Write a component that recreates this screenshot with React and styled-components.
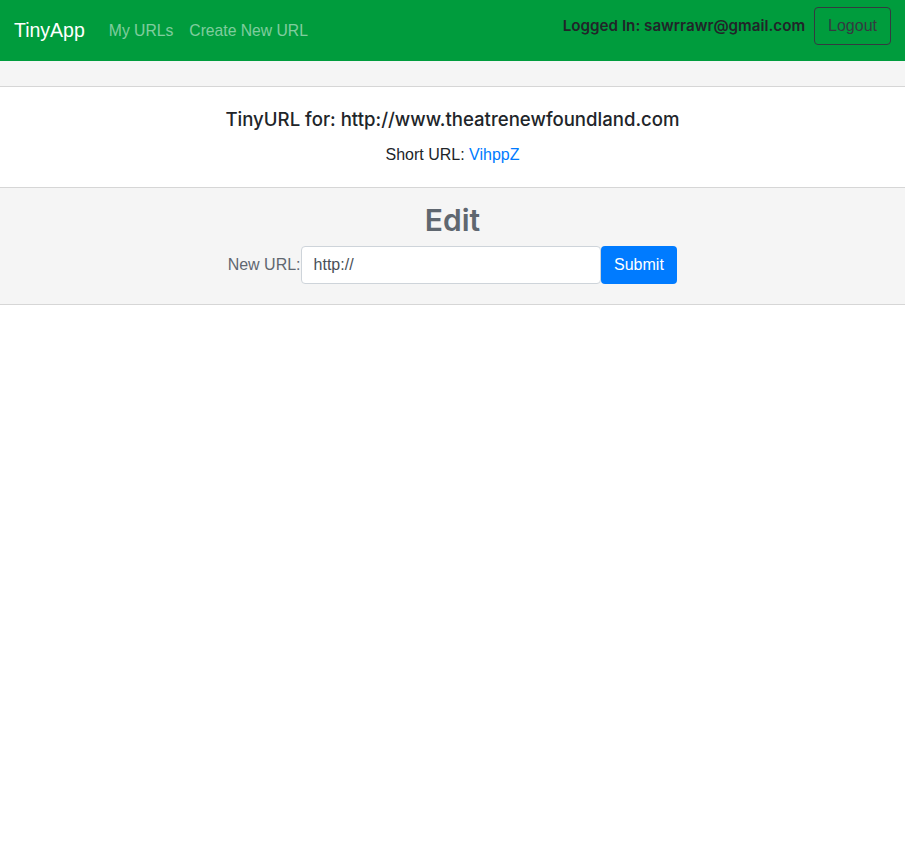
import React from "react";
import styled, { createGlobalStyle } from "styled-components";

const Global = createGlobalStyle`
  html, body { margin: 0; padding: 0; background: #fff; }
  body {
    font-family: "Liberation Sans", Arial, sans-serif;
    font-size: 16px;
    line-height: 1.5;
    color: #212529;
  }
  * { box-sizing: border-box; }
`;

const Navbar = styled.nav`
  height: 61px;
  background: #009c3d;
  display: flex;
  align-items: center;
  padding: 0 14px 0 14px;
`;

const Brand = styled.a`
  font-size: 19.5px;
  color: #fff;
  text-decoration: none;
  margin-right: 24px;
  line-height: 1;
  padding-top: 1px;
`;

const NavLinks = styled.div`
  display: flex;
  gap: 16px;
  flex: 1;
`;

const NavLink = styled.a`
  font-size: 15.7px;
  color: rgba(255, 255, 255, 0.5);
  text-decoration: none;
  padding-top: 1px;
`;

const UserArea = styled.div`
  display: flex;
  align-items: center;
  gap: 9px;
  margin-top: -9px;
`;

const UserText = styled.span`
  font-family: Inter, "Liberation Sans", sans-serif;
  font-size: 15.2px;
  font-weight: 600;
  color: #212529;
  padding-top: 1px;
`;

const LogoutButton = styled.button`
  font-family: inherit;
  font-size: 16px;
  color: #343a40;
  background: transparent;
  border: 1px solid #343a40;
  border-radius: 4px;
  height: 38px;
  padding: 0 13px;
  cursor: pointer;
`;

const Strip = styled.div`
  height: 26px;
  background: #f5f5f5;
  border-bottom: 1px solid #d6d6d6;
`;

const Card = styled.section`
  background: #fff;
  border-bottom: 1px solid #d6d6d6;
  text-align: center;
  padding: 21px 0 20px;
`;

const Title = styled.h5`
  margin: 0 0 13px;
  font-family: Inter, "Liberation Sans", sans-serif;
  font-size: 18.6px;
  font-weight: 500;
  line-height: 1.2;
  color: #212529;
`;

const ShortLine = styled.p`
  margin: 0;
  font-size: 16px;
`;

const Link = styled.a`
  color: #007bff;
  text-decoration: none;
`;

const EditSection = styled.section`
  background: #f5f5f5;
  border-bottom: 1px solid #d6d6d6;
  text-align: center;
  padding: 14px 0 20px;
`;

const EditTitle = styled.h2`
  margin: 0 0 8px;
  font-family: Inter, "Liberation Sans", sans-serif;
  font-size: 30px;
  font-weight: 600;
  color: #5f6770;
  line-height: 1.2;
`;

const Form = styled.form`
  display: flex;
  justify-content: center;
  align-items: center;
`;

const Label = styled.label`
  font-size: 16px;
  color: #5f6770;
`;

const Input = styled.input`
  font-family: inherit;
  width: 300px;
  height: 38px;
  font-size: 16px;
  color: #495057;
  padding: 0 12px;
  border: 1px solid #ced4da;
  border-radius: 4px;
  background: #fff;
  outline: none;
`;

const SubmitButton = styled.button`
  font-family: inherit;
  height: 38px;
  font-size: 16px;
  color: #fff;
  background: #007bff;
  border: none;
  border-radius: 4px;
  padding: 0 13.5px;
  cursor: pointer;
`;

export default function App() {
  return (
    <>
      <Global />
      <Navbar>
        <Brand href="#">TinyApp</Brand>
        <NavLinks>
          <NavLink href="#">My URLs</NavLink>
          <NavLink href="#">Create New URL</NavLink>
        </NavLinks>
        <UserArea>
          <UserText>Logged In: sawrrawr@gmail.com</UserText>
          <LogoutButton>Logout</LogoutButton>
        </UserArea>
      </Navbar>
      <Strip />
      <Card>
        <Title>TinyURL for: http://www.theatrenewfoundland.com</Title>
        <ShortLine>
          Short URL: <Link href="#">VihppZ</Link>
        </ShortLine>
      </Card>
      <EditSection>
        <EditTitle>Edit</EditTitle>
        <Form onSubmit={(e) => e.preventDefault()}>
          <Label>New URL:</Label>
          <Input defaultValue="http://" />
          <SubmitButton type="submit">Submit</SubmitButton>
        </Form>
      </EditSection>
    </>
  );
}
